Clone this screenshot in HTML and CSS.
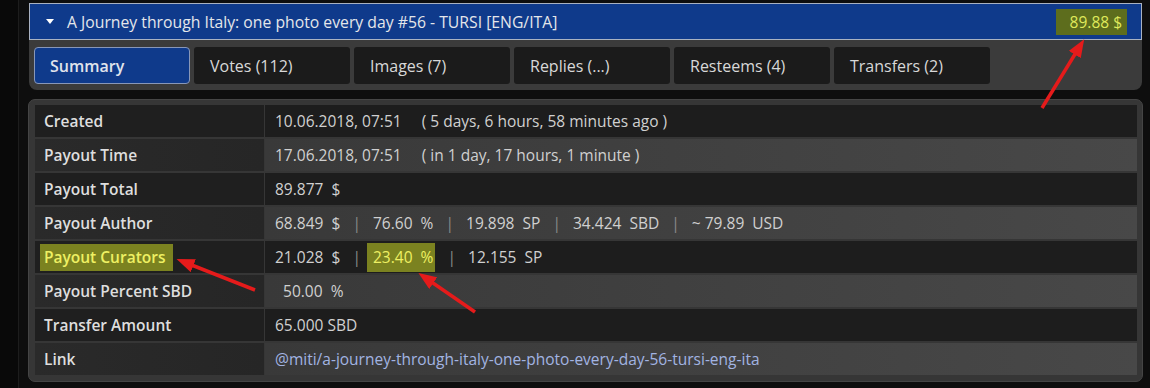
FILE: index.html
```html
<!DOCTYPE html>
<html lang="en">
  <head>
    <meta charset="UTF-8" />
    <meta name="viewport" content="width=device-width, initial-scale=1.0" />
    <title>Post Summary</title>

    <link rel="stylesheet" href="styles.css">
  </head>

  <body>
    <div class="post">
      <div class="post-head">
        <span class="caret"></span>
        <span class="post-title">A Journey through Italy: one photo every day #56 - TURSI [ENG/ITA]</span>
        <span class="post-value mark">89.88 $</span>
      </div>

      <div class="tabs">
        <a class="tab active">Summary</a>
        <a class="tab">Votes (112)</a>
        <a class="tab">Images (7)</a>
        <a class="tab">Replies (...)</a>
        <a class="tab">Resteems (4)</a>
        <a class="tab">Transfers (2)</a>
      </div>

      <div class="summary">
        <table class="info">
          <tr>
            <th>Created</th>
            <td>10.06.2018, 07:51     ( 5 days, 6 hours, 58 minutes ago )</td>
          </tr>
          <tr>
            <th>Payout Time</th>
            <td>17.06.2018, 07:51     ( in 1 day, 17 hours, 1 minute )</td>
          </tr>
          <tr>
            <th>Payout Total</th>
            <td>89.877  $</td>
          </tr>
          <tr>
            <th>Payout Author</th>
            <td>68.849  $   <span class="sep">|</span>   76.60  %   <span class="sep">|</span>   19.898  SP   <span class="sep">|</span>   34.424  SBD   <span class="sep">|</span>   ~ 79.89  USD</td>
          </tr>
          <tr>
            <th><span class="mark mark-label">Payout Curators</span></th>
            <td>21.028  $   <span class="sep">|</span>   <span class="mark mark-pct">23.40  %</span>   <span class="sep">|</span>   12.155  SP</td>
          </tr>
          <tr>
            <th>Payout Percent SBD</th>
            <td>  50.00  %</td>
          </tr>
          <tr>
            <th>Transfer Amount</th>
            <td>65.000 SBD</td>
          </tr>
          <tr>
            <th>Link</th>
            <td><a class="post-link">@miti/a-journey-through-italy-one-photo-every-day-56-tursi-eng-ita</a></td>
          </tr>
        </table>
      </div>
    </div>

    <!-- red arrows drawn on top of the screenshot -->
    <svg class="arrows" width="1150" height="388" viewBox="0 0 1150 388">
      <defs>
        <marker id="head" markerUnits="userSpaceOnUse" markerWidth="18" markerHeight="14" refX="10" refY="7" orient="auto">
          <path d="M0,0 L18,7 L0,14 Z" fill="#e51b1b" />
        </marker>
      </defs>
      <line x1="1042" y1="108" x2="1080" y2="46" marker-end="url(#head)" />
      <line x1="255" y1="290" x2="184" y2="262" marker-end="url(#head)" />
      <line x1="475" y1="312" x2="425" y2="277.5" marker-end="url(#head)" />
    </svg>
  </body>
</html>
```

FILE: styles.css
```css
body {
  font-family: "Open Sans", "Noto Sans", sans-serif;
  font-size: 16px;
  margin: 0;
  padding: 0;
  height: 388px;
  overflow: hidden;
  position: relative;
  background: linear-gradient(to right, #090909 0, #090909 18px, #1d1d1d 18px, #1d1d1d 19px, #0e0e0e 19px);
  color: #d6d6d6;
}

.post {
  margin-left: 29px;
  width: 1113px;
  padding-top: 3px;
}

.post-head {
  box-sizing: border-box;
  height: 37px;
  display: flex;
  align-items: center;
  padding: 0 14px 0 16px;
  background-color: #0f3a8b;
  border: 1px solid #a9b2c2;
  color: #e4e6ea;
}

.caret {
  width: 0;
  height: 0;
  border-left: 4px solid transparent;
  border-right: 4px solid transparent;
  border-top: 5px solid #ffffff;
  margin-right: 13px;
}

.post-title {
  flex: 1;
  font-size: 15.75px;
}

.post-value {
  padding: 2px 5px 2px 14px;
  font-size: 15.5px;
}

.mark {
  background-color: #5d6d1d;
  color: #dfe95b;
}

.mark-label {
  background-color: #7b8220;
  color: #eef063;
  padding: 2px 8px 3px 4px;
  margin-left: -4px;
}

.mark-pct {
  background-color: #7b8220;
  color: #eef063;
  padding: 3px 2px 4px 6px;
  margin-left: -6px;
}

.tabs {
  display: flex;
  gap: 4px;
  padding: 7px 5px 6px;
  background-color: #3b3b3b;
  border-radius: 0 0 8px 8px;
}

.tab {
  box-sizing: border-box;
  width: 156px;
  height: 37px;
  display: flex;
  align-items: center;
  padding-left: 16px;
  background-color: #1b1b1b;
  border-radius: 3px;
  color: #d8d8d8;
  cursor: pointer;
}

.tab.active {
  background-color: #0f3a8b;
  border: 1px solid #8897b8;
  border-radius: 4px;
  font-weight: 600;
  color: #e0e4ec;
  padding-left: 15px;
}

.summary {
  margin-top: 9px;
  padding: 3px 5px 4px 6px;
  background-color: #363636;
  border: 1px solid #454545;
  border-radius: 7px;
  margin-left: -1px;
  margin-right: -1px;
}

.info {
  width: 100%;
  border-collapse: separate;
  border-spacing: 0 2px;
  font-size: 15.5px;
}

.info th,
.info td {
  height: 32px;
  padding: 0 0 0 10px;
  text-align: left;
  white-space: pre;
}

.info th {
  width: 220px;
  padding-left: 9px;
  font-weight: 600;
  color: #dedede;
  background-color: #1f1f1f;
  border-right: 1px solid #363636;
}

.info td {
  color: #d0d0d0;
  background-color: #1d1d1d;
}

.info tr:nth-child(even) th {
  background: linear-gradient(to right, #2a2a2a, #262626);
}

.info tr:nth-child(even) td {
  background: linear-gradient(to right, #393939, #484848);
}

.sep {
  color: #8a8a8a;
}

.post-link {
  color: #a2b4e2;
  cursor: pointer;
}

.arrows {
  position: absolute;
  left: 0;
  top: 0;
  pointer-events: none;
}

.arrows line {
  stroke: #e51b1b;
  stroke-width: 3.5;
}
```
